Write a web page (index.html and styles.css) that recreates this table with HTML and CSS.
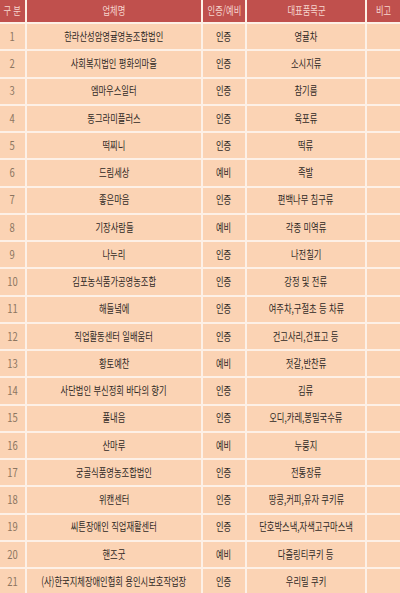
FILE: index.html
```html
<!DOCTYPE html>
<html lang="ko">
<head>
<meta charset="utf-8">
<link rel="stylesheet" href="styles.css">
</head>
<body>
<div class="table">
  <div class="cell head"><span>구 분</span></div>
  <div class="cell head"><span>업체명</span></div>
  <div class="cell head"><span>인증/예비</span></div>
  <div class="cell head"><span>대표품목군</span></div>
  <div class="cell head"><span>비고</span></div>

  <div class="cell num"><span>1</span></div><div class="cell"><span>한라산성암영귤영농조합법인</span></div><div class="cell"><span>인증</span></div><div class="cell"><span>영귤차</span></div><div class="cell"></div>
  <div class="cell num"><span>2</span></div><div class="cell"><span>사회복지법인 평화의마을</span></div><div class="cell"><span>인증</span></div><div class="cell"><span>소시지류</span></div><div class="cell"></div>
  <div class="cell num"><span>3</span></div><div class="cell"><span>엠마우스일터</span></div><div class="cell"><span>인증</span></div><div class="cell"><span>참기름</span></div><div class="cell"></div>
  <div class="cell num"><span>4</span></div><div class="cell"><span>동그라미플러스</span></div><div class="cell"><span>인증</span></div><div class="cell"><span>육포류</span></div><div class="cell"></div>
  <div class="cell num"><span>5</span></div><div class="cell"><span>떡찌니</span></div><div class="cell"><span>인증</span></div><div class="cell"><span>떡류</span></div><div class="cell"></div>
  <div class="cell num"><span>6</span></div><div class="cell"><span>드림세상</span></div><div class="cell"><span>예비</span></div><div class="cell"><span>족발</span></div><div class="cell"></div>
  <div class="cell num"><span>7</span></div><div class="cell"><span>좋은마음</span></div><div class="cell"><span>인증</span></div><div class="cell"><span>편백나무 침구류</span></div><div class="cell"></div>
  <div class="cell num"><span>8</span></div><div class="cell"><span>기장사람들</span></div><div class="cell"><span>예비</span></div><div class="cell"><span>각종 미역류</span></div><div class="cell"></div>
  <div class="cell num"><span>9</span></div><div class="cell"><span>나누리</span></div><div class="cell"><span>인증</span></div><div class="cell"><span>나전칠기</span></div><div class="cell"></div>
  <div class="cell num"><span>10</span></div><div class="cell"><span>김포농식품가공영농조합</span></div><div class="cell"><span>인증</span></div><div class="cell"><span>강정 및 전류</span></div><div class="cell"></div>
  <div class="cell num"><span>11</span></div><div class="cell"><span>해들녘에</span></div><div class="cell"><span>인증</span></div><div class="cell"><span>여주차,구절초 등 차류</span></div><div class="cell"></div>
  <div class="cell num"><span>12</span></div><div class="cell"><span>직업활동센터 일배움터</span></div><div class="cell"><span>인증</span></div><div class="cell"><span>건고사리,건표고 등</span></div><div class="cell"></div>
  <div class="cell num"><span>13</span></div><div class="cell"><span>황토예찬</span></div><div class="cell"><span>예비</span></div><div class="cell"><span>젓갈,반찬류</span></div><div class="cell"></div>
  <div class="cell num"><span>14</span></div><div class="cell"><span>사단법인 부신정회 바다의 향기</span></div><div class="cell"><span>인증</span></div><div class="cell"><span>김류</span></div><div class="cell"></div>
  <div class="cell num"><span>15</span></div><div class="cell"><span>풀내음</span></div><div class="cell"><span>인증</span></div><div class="cell"><span>오디,카레,봉밀국수류</span></div><div class="cell"></div>
  <div class="cell num"><span>16</span></div><div class="cell"><span>산마루</span></div><div class="cell"><span>예비</span></div><div class="cell"><span>누룽지</span></div><div class="cell"></div>
  <div class="cell num"><span>17</span></div><div class="cell"><span>궁골식품영농조합법인</span></div><div class="cell"><span>인증</span></div><div class="cell"><span>전통장류</span></div><div class="cell"></div>
  <div class="cell num"><span>18</span></div><div class="cell"><span>위캔센터</span></div><div class="cell"><span>인증</span></div><div class="cell"><span>땅콩,커피,유자 쿠키류</span></div><div class="cell"></div>
  <div class="cell num"><span>19</span></div><div class="cell"><span>씨튼장애인 직업재활센터</span></div><div class="cell"><span>인증</span></div><div class="cell"><span>단호박스낵,자색고구마스낵</span></div><div class="cell"></div>
  <div class="cell num"><span>20</span></div><div class="cell"><span>핸즈굿</span></div><div class="cell"><span>예비</span></div><div class="cell"><span>다즐링티쿠키 등</span></div><div class="cell"></div>
  <div class="cell num"><span>21</span></div><div class="cell"><span>(사)한국지체장애인협회 용인시보호작업장</span></div><div class="cell"><span>인증</span></div><div class="cell"><span>우리밀 쿠키</span></div><div class="cell"></div>
</div>
</body>
</html>
```

FILE: styles.css
```css
html, body {
  margin: 0;
  padding: 0;
  background: #ffffff;
  overflow: hidden;
}

.table {
  display: grid;
  grid-template-columns: 25px 174px 42px 118px 33px;
  grid-template-rows: 22px;
  grid-auto-rows: 25.25px;
  column-gap: 2px;
  row-gap: 2px;
  width: 400px;
  background: #fdf0e6;
  font-family: "Noto Sans CJK KR", "Noto Sans", sans-serif;
  font-size: 11.5px;
  color: #2f2925;
}

.cell {
  background: #fbd3b4;
  display: flex;
  align-items: center;
  justify-content: center;
  overflow: visible;
  white-space: nowrap;
}

.cell span {
  display: inline-block;
  transform: scaleX(0.72);
  line-height: 1;
}

.head {
  background: #c0504d;
  color: #f6d6cf;
}

.num {
  color: #8c7560;
}

.num span {
  transform: scaleX(0.82);
}
```
